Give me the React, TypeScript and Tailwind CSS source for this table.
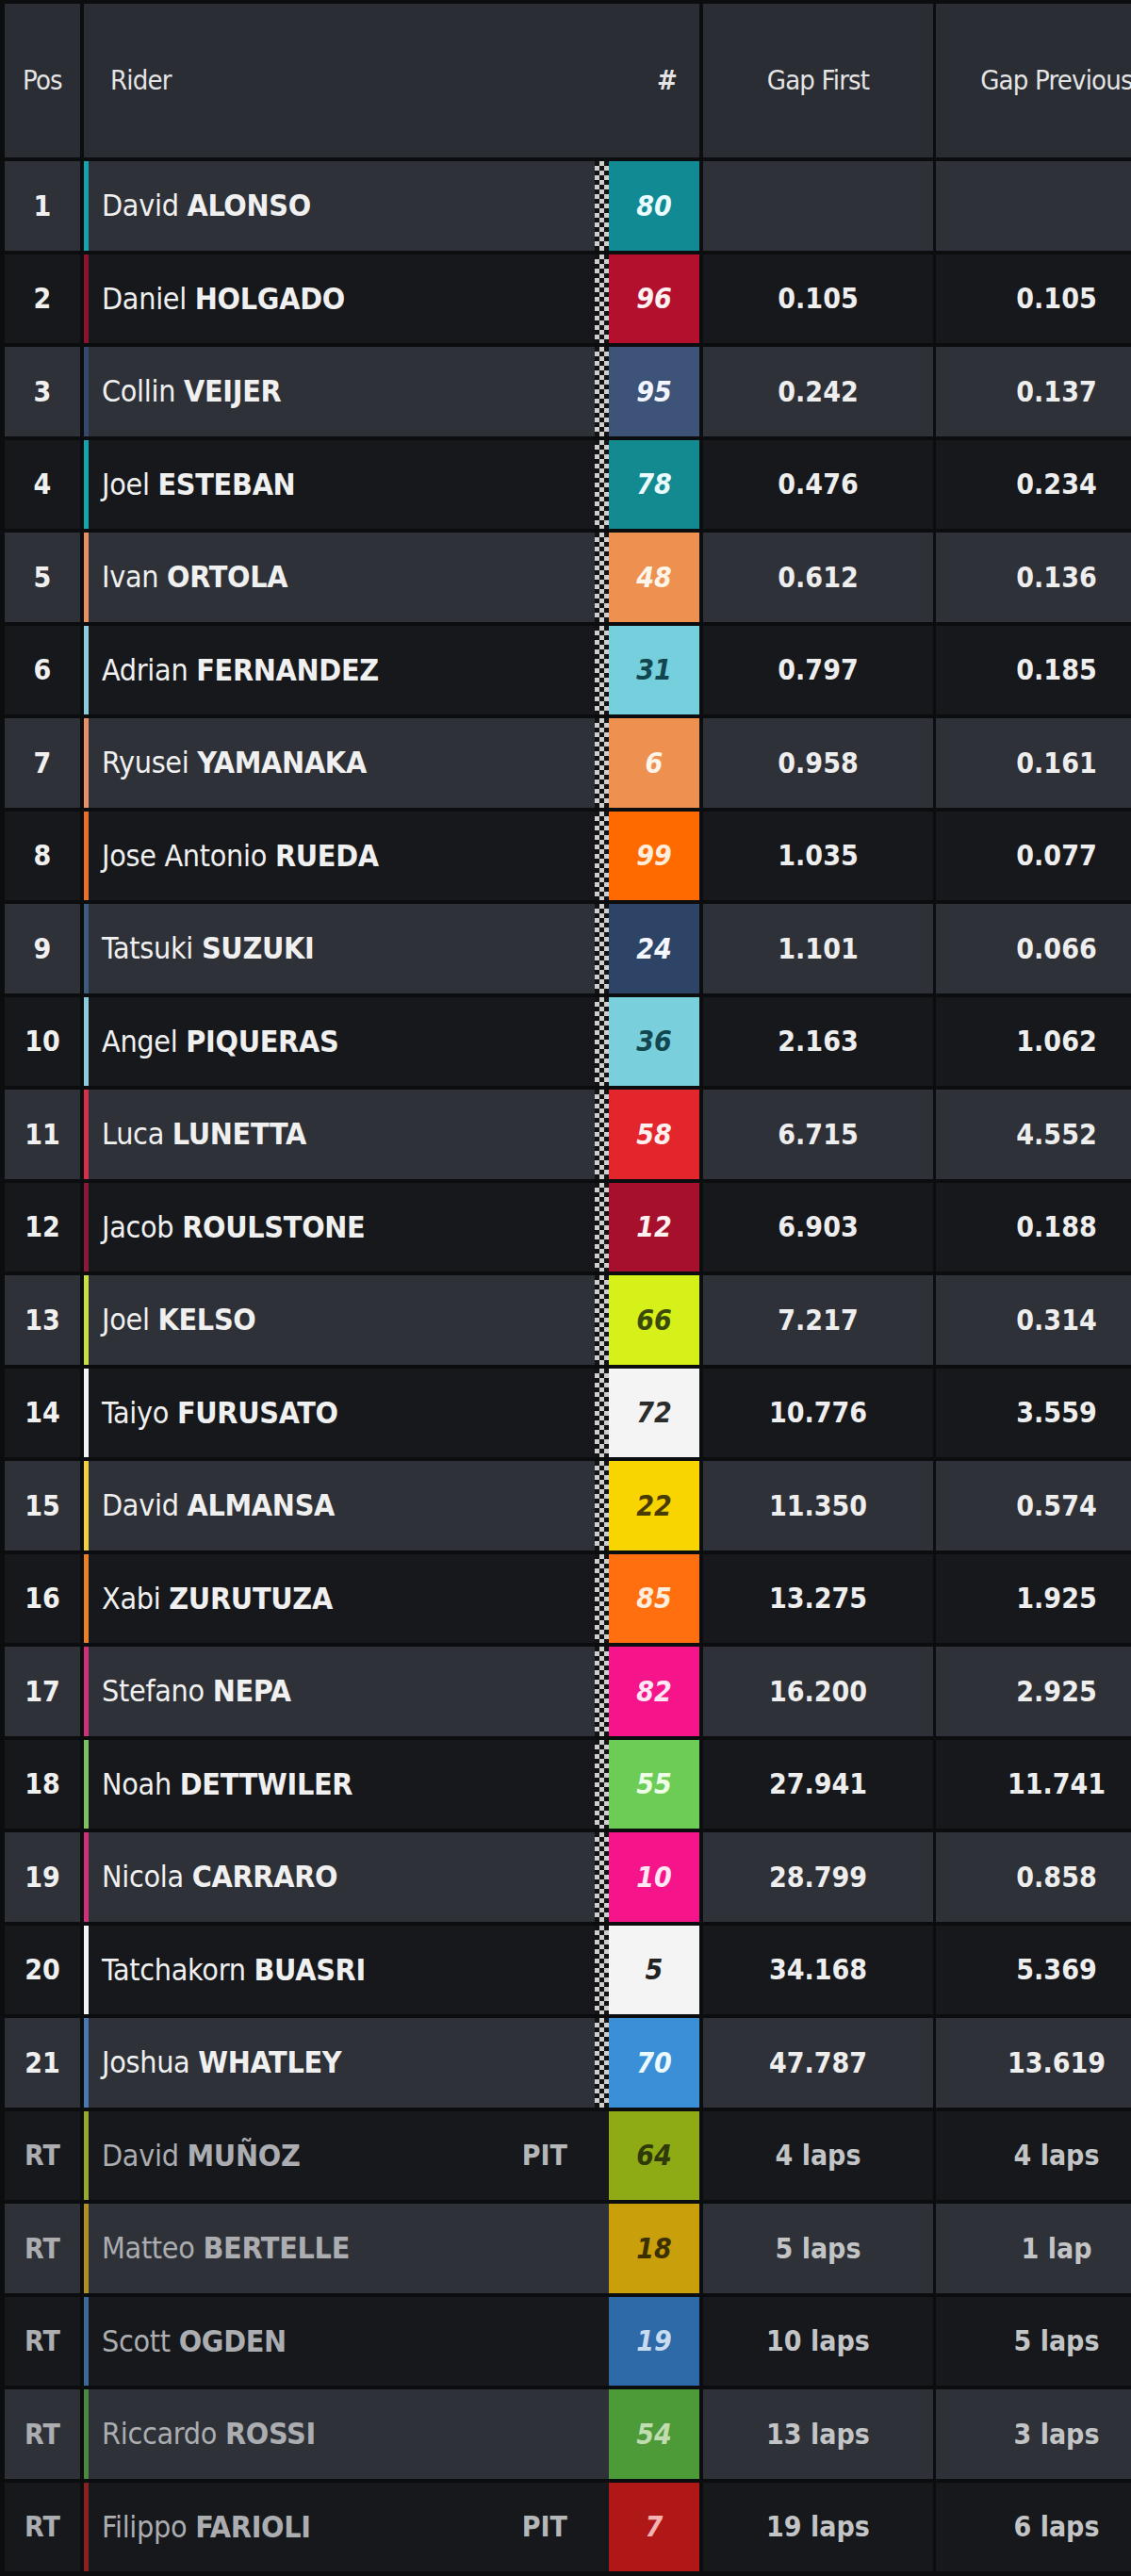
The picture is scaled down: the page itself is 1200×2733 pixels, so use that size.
import React from 'react';

interface Rider {
    pos: string;
    first: string;
    last: string;
    num: string;
    box: string;
    strip: string;
    ink: string;
    gapFirst: string;
    gapPrev: string;
    pit?: boolean;
}

const riders: Rider[] = [
    { pos: '1', first: 'David', last: 'ALONSO', num: '80', box: '#118a94', strip: '#15a3ad', ink: '#eafcff', gapFirst: '', gapPrev: '' },
    { pos: '2', first: 'Daniel', last: 'HOLGADO', num: '96', box: '#b3102e', strip: '#8c1230', ink: '#fff0f2', gapFirst: '0.105', gapPrev: '0.105' },
    { pos: '3', first: 'Collin', last: 'VEIJER', num: '95', box: '#3d5478', strip: '#34496b', ink: '#f2f5ff', gapFirst: '0.242', gapPrev: '0.137' },
    { pos: '4', first: 'Joel', last: 'ESTEBAN', num: '78', box: '#138a90', strip: '#15a3ad', ink: '#eafcff', gapFirst: '0.476', gapPrev: '0.234' },
    { pos: '5', first: 'Ivan', last: 'ORTOLA', num: '48', box: '#ee9050', strip: '#e89060', ink: '#fff6ea', gapFirst: '0.612', gapPrev: '0.136' },
    { pos: '6', first: 'Adrian', last: 'FERNANDEZ', num: '31', box: '#76cfdc', strip: '#8ccbdb', ink: '#12474f', gapFirst: '0.797', gapPrev: '0.185' },
    { pos: '7', first: 'Ryusei', last: 'YAMANAKA', num: '6', box: '#ee9050', strip: '#e8906a', ink: '#fff6ea', gapFirst: '0.958', gapPrev: '0.161' },
    { pos: '8', first: 'Jose Antonio', last: 'RUEDA', num: '99', box: '#ff6a00', strip: '#e8702a', ink: '#ffeedd', gapFirst: '1.035', gapPrev: '0.077' },
    { pos: '9', first: 'Tatsuki', last: 'SUZUKI', num: '24', box: '#2e4466', strip: '#3e5a80', ink: '#f4f7ff', gapFirst: '1.101', gapPrev: '0.066' },
    { pos: '10', first: 'Angel', last: 'PIQUERAS', num: '36', box: '#7acfdc', strip: '#8ccbdb', ink: '#12474f', gapFirst: '2.163', gapPrev: '1.062' },
    { pos: '11', first: 'Luca', last: 'LUNETTA', num: '58', box: '#e3262b', strip: '#d4304a', ink: '#fff0f0', gapFirst: '6.715', gapPrev: '4.552' },
    { pos: '12', first: 'Jacob', last: 'ROULSTONE', num: '12', box: '#a6102c', strip: '#8a1838', ink: '#fff0f2', gapFirst: '6.903', gapPrev: '0.188' },
    { pos: '13', first: 'Joel', last: 'KELSO', num: '66', box: '#d6f01a', strip: '#c8e040', ink: '#3a4a08', gapFirst: '7.217', gapPrev: '0.314' },
    { pos: '14', first: 'Taiyo', last: 'FURUSATO', num: '72', box: '#f4f4f4', strip: '#f4f4f4', ink: '#2c2c2c', gapFirst: '10.776', gapPrev: '3.559' },
    { pos: '15', first: 'David', last: 'ALMANSA', num: '22', box: '#f8d400', strip: '#f0d040', ink: '#4a3c00', gapFirst: '11.350', gapPrev: '0.574' },
    { pos: '16', first: 'Xabi', last: 'ZURUTUZA', num: '85', box: '#ff6f10', strip: '#e8802a', ink: '#ffeedd', gapFirst: '13.275', gapPrev: '1.925' },
    { pos: '17', first: 'Stefano', last: 'NEPA', num: '82', box: '#f5148a', strip: '#d0307a', ink: '#ffe8f4', gapFirst: '16.200', gapPrev: '2.925' },
    { pos: '18', first: 'Noah', last: 'DETTWILER', num: '55', box: '#6ccc55', strip: '#7cc060', ink: '#eeffe8', gapFirst: '27.941', gapPrev: '11.741' },
    { pos: '19', first: 'Nicola', last: 'CARRARO', num: '10', box: '#f5148a', strip: '#d0307a', ink: '#ffe8f4', gapFirst: '28.799', gapPrev: '0.858' },
    { pos: '20', first: 'Tatchakorn', last: 'BUASRI', num: '5', box: '#f4f4f4', strip: '#f4f4f4', ink: '#222222', gapFirst: '34.168', gapPrev: '5.369' },
    { pos: '21', first: 'Joshua', last: 'WHATLEY', num: '70', box: '#3b8fd6', strip: '#4a78b0', ink: '#eafaff', gapFirst: '47.787', gapPrev: '13.619' },
    { pos: 'RT', first: 'David', last: 'MUÑOZ', num: '64', box: '#8eab16', strip: '#9aa830', ink: '#2f3a08', gapFirst: '4 laps', gapPrev: '4 laps', pit: true },
    { pos: 'RT', first: 'Matteo', last: 'BERTELLE', num: '18', box: '#c9a00c', strip: '#b09020', ink: '#3c3000', gapFirst: '5 laps', gapPrev: '1 lap' },
    { pos: 'RT', first: 'Scott', last: 'OGDEN', num: '19', box: '#2e6aa8', strip: '#3a6a9a', ink: '#c8dcef', gapFirst: '10 laps', gapPrev: '5 laps' },
    { pos: 'RT', first: 'Riccardo', last: 'ROSSI', num: '54', box: '#4c9a38', strip: '#4a8a40', ink: '#c0dcb0', gapFirst: '13 laps', gapPrev: '3 laps' },
    { pos: 'RT', first: 'Filippo', last: 'FARIOLI', num: '7', box: '#b01818', strip: '#8a2020', ink: '#f4b4b4', gapFirst: '19 laps', gapPrev: '6 laps', pit: true },
];

const font = { fontFamily: '"DejaVu Sans Condensed", "Liberation Sans Narrow", "Liberation Sans", sans-serif' };

const ResultRow: React.FC<{ rider: Rider; index: number }> = ({ rider, index }) => {
    const light = index % 2 === 0;
    const retired = rider.pos === 'RT';
    const bg = light ? 'bg-[#2e3137]' : 'bg-[#16181c]';
    const text = retired ? 'text-[#abadb0]' : 'text-[#f0f0f0]';

    return (
        <div className="flex h-[94.5px]">
            <div className={`w-[80px] flex items-center justify-center text-[30px] font-bold ${bg} ${text}`}>
                {rider.pos}
            </div>
            <div
                className={`ml-[4px] w-[557px] flex items-center border-l-[5px] ${bg}`}
                style={{ borderLeftColor: rider.strip }}
            >
                <span className={`pl-[14px] text-[32px] tracking-[-0.3px] ${text}`}>
                    {rider.first} <span className="font-bold">{rider.last}</span>
                </span>
                {rider.pit && (
                    <span className="ml-auto mr-[44px] text-[30px] font-bold text-[#b4b6b8]">PIT</span>
                )}
                {!retired && (
                    <div className="ml-auto self-stretch w-[15px] bg-[conic-gradient(#cfcfcf_25%,#131313_0_50%,#cfcfcf_0_75%,#131313_0)] bg-[length:10px_10px]" />
                )}
            </div>
            <div
                className="w-[96px] flex items-center justify-center text-[30px] font-bold italic"
                style={{ backgroundColor: rider.box, color: rider.ink }}
            >
                {rider.num}
            </div>
            <div className={`ml-[4px] w-[244px] flex items-center justify-center text-[30px] font-bold ${bg} ${retired ? 'text-[#c2c4c6]' : 'text-[#eeeeee]'}`}>
                {rider.gapFirst}
            </div>
            <div className={`ml-[3px] w-[256px] flex items-center justify-center text-[30px] font-bold ${bg} ${retired ? 'text-[#c2c4c6]' : 'text-[#eeeeee]'}`}>
                {rider.gapPrev}
            </div>
        </div>
    );
};

export default function App() {
    return (
        <div className="w-[1200px] h-[2733px] overflow-hidden bg-[#0c0d0f]" style={font}>
            <div className="w-[1260px] pt-[4px] pl-[5px] flex flex-col gap-[4px]">
                {/* header */}
                <div className="flex h-[163px] text-[29px] text-[#e4e4e4] tracking-[-0.8px]">
                    <div className="w-[80px] flex items-center justify-center bg-[#2a2d33]">Pos</div>
                    <div className="ml-[4px] w-[557px] flex items-center pl-[28px] bg-[#2a2d33]">Rider</div>
                    <div className="w-[96px] flex items-center justify-end pr-[24px] bg-[#2a2d33] font-bold">#</div>
                    <div className="ml-[4px] w-[244px] flex items-center justify-center bg-[#2a2d33]">Gap First</div>
                    <div className="ml-[3px] w-[256px] flex items-center justify-center bg-[#2a2d33]">Gap Previous</div>
                </div>
                {riders.map((rider, index) => (
                    <ResultRow key={rider.num} rider={rider} index={index} />
                ))}
            </div>
        </div>
    );
}
